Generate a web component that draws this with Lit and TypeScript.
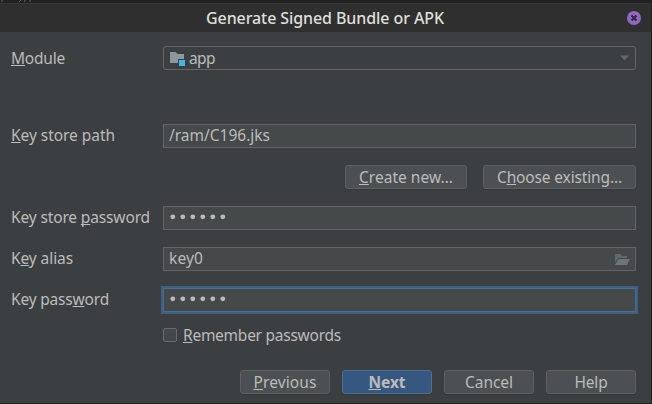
import { LitElement, html, css, svg } from "lit";
import { customElement, property } from "lit/decorators.js";

/** Text run with an optional mnemonic letter, condensed to a given advance width. */
@customElement("mnemonic-text")
class MnemonicText extends LitElement {
  @property() text = "";
  @property({ type: Number }) at = -1;
  @property({ type: Number }) width = 0;

  static styles = css`
    :host { display: inline-block; white-space: pre; line-height: 24px; height: 24px; }
    .run { display: inline-block; }
    .key { text-decoration: underline; text-decoration-thickness: 1px; text-underline-offset: 1px; text-decoration-skip-ink: none; }
  `;

  updated() {
    const run = this.renderRoot.querySelector<HTMLElement>(".run")!;
    run.style.letterSpacing = "0";
    const natural = run.getBoundingClientRect().width;
    run.style.letterSpacing = `${(this.width - natural) / this.text.length}px`;
  }

  render() {
    const { text, at } = this;
    return html`<span class="run">${at < 0
      ? text
      : html`${text.slice(0, at)}<span class="key">${text[at]}</span>${text.slice(at + 1)}`}</span>`;
  }
}

const t = (text: string, width: number, at = -1) =>
  html`<mnemonic-text .text=${text} .width=${width} .at=${at}></mnemonic-text>`;

const dots = svg`${[0, 1, 2, 3, 4, 5].map((i) => svg`<circle cx=${3.8 + i * 10} cy="9.8" r="2.4" fill="#bbbbbb"/>`)}`;

@customElement("app-root")
class AppRoot extends LitElement {
  static styles = css`
    :host {
      display: block; width: 652px; height: 404px; box-sizing: border-box; overflow: hidden;
      background: #212121; color: #bbbbbb;
      font: 15.5px/24px "Noto Sans", "Open Sans", sans-serif;
    }
    * { box-sizing: border-box; }
    svg { display: block; flex: none; }
    .behind { height: 3px; }
    .dialog { width: 651px; height: 400px; background: #3c3f41; }
    .title {
      height: 29px; background: #2f2f2f; border-top: 1px solid #383838; color: #dfdfdb;
      display: grid; grid-template-columns: 206px 1fr 24px; align-items: center;
      font-weight: 500; font-size: 16px;
    }
    .title mnemonic-text { grid-column: 2; margin-top: -1px; }
    .form { padding: 14px 15px 0 11px; display: grid; grid-template-columns: 152px 473px; grid-template-rows: 24px 54px 24px 17px 24px 17px 24px 17px 24px 17px 24px 16px 16px; }
    .field { grid-column: 2; height: 24px; border: 1px solid #646464; background: #45494a; display: flex; padding: 0 5px; }
    .combo { background: #3c3f41; border-radius: 3px; align-items: center; padding-right: 6px; }
    .combo mnemonic-text { margin-left: 4px; }
    .grow { flex: 1; }
    .label { grid-column: 1; height: 24px; margin-top: -1px; }
    .label.module { margin-top: 0; }
    .field mnemonic-text { margin-top: -2px; }
    .combo mnemonic-text { margin-top: 0; }
    .r3 { grid-row: 3; } .r5 { grid-row: 5; } .r7 { grid-row: 7; }
    .r9 { grid-row: 9; } .r11 { grid-row: 11; } .r13 { grid-row: 13; }
    .focused { border-color: #466d94; box-shadow: 0 0 0 2px #3d6185; }
    .pair { grid-column: 2; display: flex; justify-content: flex-end; gap: 16px; }
    .button {
      width: 90px; height: 24px; border: 1px solid #5e6060; border-radius: 3px; background: #4c5052;
      display: flex; justify-content: center; align-items: center; box-shadow: 0 1px 0 #353839;
    }
    .create { width: 122px; }
    .choose { width: 153px; }
    .primary { background: #365880; border-color: #4c708c; font-weight: 700; }
    .check { grid-column: 2; display: flex; align-items: flex-start; height: 14px; gap: 6px; }
    .check mnemonic-text { margin-top: -5px; }
    .box { width: 14px; height: 14px; border: 1px solid #6b6b6b; border-radius: 2px; background: #43494a; }
    .actions { display: flex; justify-content: flex-end; gap: 12px; padding: 26px 15px 0 0; }
  `;

  render() {
    return html`
      <svg class="behind" width="652" height="3"><path d="M2 0v2M19 2l2-2M25 0v1l-1 1M30 0v2" fill="none" stroke="#46647c"/></svg>
      <div class="dialog">
        <div class="title">
          ${t("Generate Signed Bundle or APK", 238)}
          <svg width="14" height="14" viewBox="0 0 14 14">
            <circle cx="7" cy="7" r="7" fill="#9068c3"/>
            <path d="M4.5 4.5l5 5M9.5 4.5l-5 5" stroke="#30283b" stroke-width="2"/>
          </svg>
        </div>
        <div class="form">
          <div class="label module">${t("Module", 54, 0)}</div>
          <div class="field combo">
            <svg width="16" height="16" viewBox="0 0 16 16">
              <path d="M1 2h5.5l2 2H15v5H9v4H1z" fill="#8c989e"/>
              <path d="M10 10h6v6h-6z" fill="#40b6e0"/>
            </svg>
            ${t("app", 26)}
            <span class="grow"></span>
            <svg width="9" height="6" viewBox="0 0 9 6"><path d="M0 .5h9L4.5 5.5z" fill="#626466"/></svg>
          </div>
          <div class="label r3">${t("Key store path", 104, 0)}</div>
          <div class="field r3">${t("/ram/C196.jks", 101)}</div>
          <div class="pair r5">
            <div class="button create">${t("Create new...", 94, 0)}</div>
            <div class="button choose">${t("Choose existing...", 125, 1)}</div>
          </div>
          <div class="label r7">${t("Key store password", 139, 10)}</div>
          <div class="field r7"><svg width="60" height="22">${dots}</svg></div>
          <div class="label r9">${t("Key alias", 62, 1)}</div>
          <div class="field r9">${t("key0", 34)}
            <span class="grow"></span>
            <svg width="16" height="22" viewBox="0 0 16 22">
              <path d="M1 6h5l2 2h5v2H4l-3 5z" fill="#62686a"/>
              <path d="M4.5 11H16l-3 6H1z" fill="#6d7578"/>
            </svg>
          </div>
          <div class="label r11">${t("Key password", 98, 8)}</div>
          <div class="field focused r11"><svg width="60" height="22">${dots}</svg></div>
          <div class="check r13"><span class="box"></span>${t("Remember passwords", 158, 0)}</div>
        </div>
        <div class="actions">
          <div class="button">${t("Previous", 63, 0)}</div>
          <div class="button primary">${t("Next", 37, 0)}</div>
          <div class="button">${t("Cancel", 48)}</div>
          <div class="button">${t("Help", 33)}</div>
        </div>
      </div>`;
  }
}
